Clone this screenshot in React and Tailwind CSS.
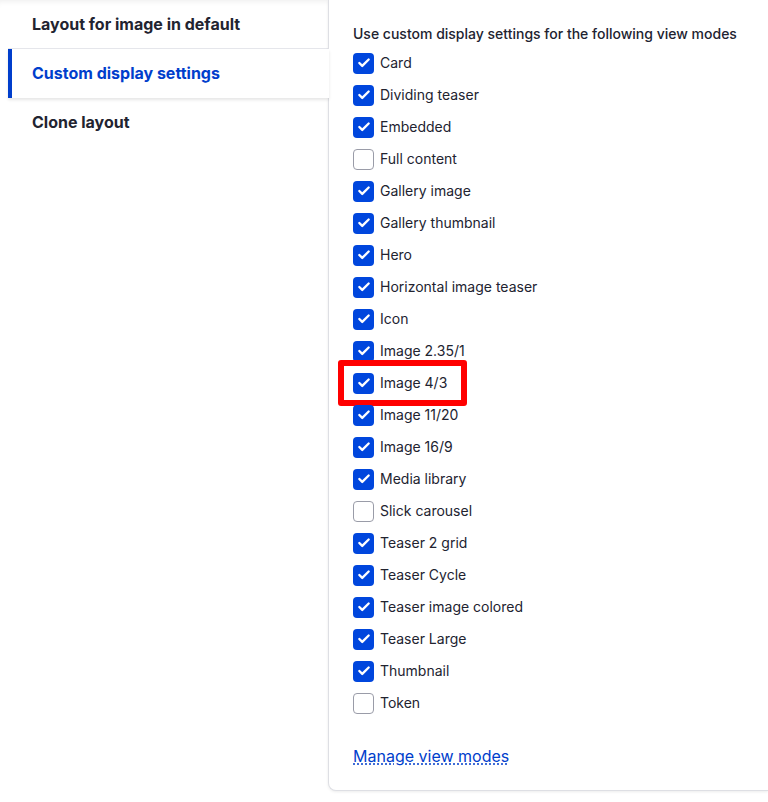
import { Check } from 'lucide-react';

const VIEW_MODES = [
  { label: 'Card', checked: true },
  { label: 'Dividing teaser', checked: true },
  { label: 'Embedded', checked: true },
  { label: 'Full content', checked: false },
  { label: 'Gallery image', checked: true },
  { label: 'Gallery thumbnail', checked: true },
  { label: 'Hero', checked: true },
  { label: 'Horizontal image teaser', checked: true },
  { label: 'Icon', checked: true },
  { label: 'Image 2.35/1', checked: true },
  { label: 'Image 4/3', checked: true, highlight: true },
  { label: 'Image 11/20', checked: true },
  { label: 'Image 16/9', checked: true },
  { label: 'Media library', checked: true },
  { label: 'Slick carousel', checked: false },
  { label: 'Teaser 2 grid', checked: true },
  { label: 'Teaser Cycle', checked: true },
  { label: 'Teaser image colored', checked: true },
  { label: 'Teaser Large', checked: true },
  { label: 'Thumbnail', checked: true },
  { label: 'Token', checked: false },
];

const TABS = [
  { label: 'Layout for image in default', active: false, border: true },
  { label: 'Custom display settings', active: true },
  { label: 'Clone layout', active: false, border: false },
];

function Checkbox({ checked }) {
  if (checked) {
    return (
      <span className="flex h-[21px] w-[21px] shrink-0 items-center justify-center rounded-[4px] bg-[#0046dd]">
        <Check className="h-[14px] w-[14px] text-white" strokeWidth={4} />
      </span>
    );
  }
  return <span className="h-[21px] w-[21px] shrink-0 rounded-[4px] border border-[#9a9ca8] bg-white" />;
}

export default function App() {
  return (
    <div className="flex min-h-[802px] bg-white font-['Inter',sans-serif] text-[#222330] shadow-[inset_0_6px_6px_-5px_rgba(0,0,0,0.08)]">
      <div className="w-[328px] shrink-0 pl-2">
        {TABS.map((tab) =>
          tab.active ? (
            <div
              key={tab.label}
              className="relative z-10 -mr-px flex h-[49px] items-center border-l-4 border-[#003ecc] bg-white pb-px pl-5 text-base font-bold text-[#003ecc] shadow-[0_2px_3px_rgba(0,0,0,0.1)]"
            >
              {tab.label}
            </div>
          ) : (
            <div
              key={tab.label}
              className={
                tab.border
                  ? 'flex h-[49px] items-center border-b border-[#e6e7ec] pl-6 text-base font-bold'
                  : 'flex h-[49px] items-center pb-px pl-6 text-base font-bold'
              }
            >
              {tab.label}
            </div>
          ),
        )}
      </div>

      <div className="mb-[12px] flex-1 self-start rounded-bl-lg border-b border-l border-[#dedfe4] bg-white px-6 pb-[22px] pt-6 shadow-[0_1px_3px_rgba(0,0,0,0.08)]">
        <div className="text-sm font-medium leading-5">
          Use custom display settings for the following view modes
        </div>
        <div className="mt-[3px] flex flex-col">
          {VIEW_MODES.map((mode) => (
            <div key={mode.label} className="flex h-8 items-center">
              <div
                className={
                  mode.highlight
                    ? '-ml-[15px] flex h-[46px] shrink-0 items-center gap-[6px] rounded-[3px] border-[6px] border-[#ff0000] pl-[9px] pr-[14px]'
                    : 'flex items-center gap-[6px]'
                }
              >
                <Checkbox checked={mode.checked} />
                <span className="text-sm leading-5">{mode.label}</span>
              </div>
            </div>
          ))}
        </div>
        <a
          href="#"
          className="mt-[25px] inline-block text-base leading-6 text-[#003ecc] underline decoration-dotted underline-offset-2"
        >
          Manage view modes
        </a>
      </div>
    </div>
  );
}
